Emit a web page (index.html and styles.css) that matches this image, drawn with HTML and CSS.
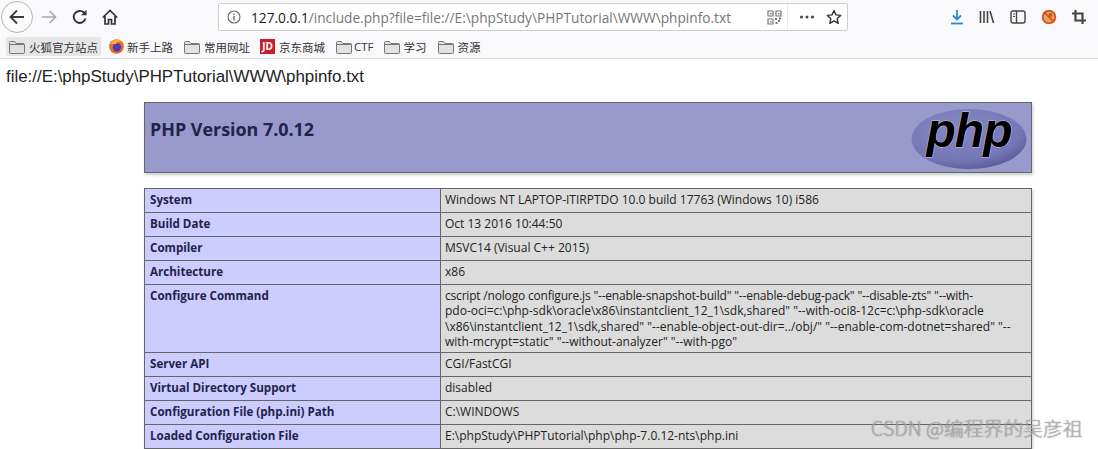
FILE: index.html
```html
<!DOCTYPE html>
<html lang="zh">
<head>
<meta charset="utf-8">
<title>phpinfo</title>
<link rel="stylesheet" href="styles.css">
</head>
<body>
<header class="chrome">
  <div class="navbar">
    <div class="nav-left">
      <span class="back"><svg width="20" height="20" viewBox="0 0 20 20"><path d="M17 10H4M10 3.500L3.500 10l6.500 6.500" fill="none" stroke="#3a3a3c" stroke-width="1.800"/></svg></span>
      <svg class="fwd" width="18" height="18" viewBox="0 0 18 18"><path d="M2 9h13M9.500 3l6 6-6 6" fill="none" stroke="#a9a9ab" stroke-width="1.600"/></svg>
      <svg class="reload" width="18" height="18" viewBox="0 0 18 18"><path d="M14.500 10.500A6 6 0 1 1 12.800 4.500L15 6.500" fill="none" stroke="#333" stroke-width="1.900"/><path d="M15.500 1.800v5.500H10z" fill="#333"/></svg>
      <svg class="home" width="18" height="18" viewBox="0 0 18 18"><path d="M1.800 9.500L9 2.500l7.200 7M4 8v8h3.500v-4.500h3V16H14V8" fill="none" stroke="#333" stroke-width="1.700"/></svg>
    </div>
    <div class="urlbar">
      <svg class="info" width="14" height="14" viewBox="0 0 14 14"><circle cx="7" cy="7" r="6" fill="none" stroke="#666" stroke-width="1.100"/><path d="M7 6v4.500M7 3.500v1.400" stroke="#666" stroke-width="1.300"/></svg>
      <div class="url"><span class="host">127.0.0.1</span>/include.php?file=file://E:\phpStudy\PHPTutorial\WWW\phpinfo.txt</div>
      <svg class="qr" width="15" height="15" viewBox="0 0 15 15"><path d="M1 1h5v5H1zM9 1h5v5H9zM1 9h5v5H1z" fill="none" stroke="#777" stroke-width="1.200"/><path d="M3 3h1.500v1.500H3zM11 3h1.500v1.500H11zM3 11h1.500v1.500H3zM8 8h2v2H8zM11 10h2v2h-2zM8.500 12h2v2h-2zM12 7.500h2v2h-2z" fill="#777"/></svg>
      <span class="url-sep"></span>
      <svg class="dots" width="16" height="4" viewBox="0 0 16 4"><circle cx="2.500" cy="2" r="1.500" fill="#444"/><circle cx="8" cy="2" r="1.500" fill="#444"/><circle cx="13.500" cy="2" r="1.500" fill="#444"/></svg>
      <svg class="star" width="16" height="16" viewBox="0 0 16 16"><path d="M8 1.500l2 4.400 4.700.5-3.500 3.200 1 4.700L8 11.900l-4.200 2.400 1-4.700L1.300 6.400 6 5.900z" fill="none" stroke="#333" stroke-width="1.400" stroke-linejoin="round"/></svg>
    </div>
    <div class="tools">
      <svg width="14" height="16" viewBox="0 0 14 16"><path d="M7 1v9M3 6.500l4 4 4-4" fill="none" stroke="#2a8ad8" stroke-width="1.800"/><path d="M1 14.500h12" stroke="#2a8ad8" stroke-width="1.800"/></svg>
      <svg width="16" height="14" viewBox="0 0 16 14"><path d="M1.500 1v12M5 1v12M8.500 1v12M11 1l3.500 12" fill="none" stroke="#444" stroke-width="1.600"/></svg>
      <svg width="16" height="14" viewBox="0 0 16 14"><rect x="1" y="1" width="14" height="12" rx="2" fill="none" stroke="#444" stroke-width="1.400"/><path d="M6.500 1v12" stroke="#444" stroke-width="1.400"/><path d="M3 4h2M3 6.500h2" stroke="#444"/></svg>
      <svg width="16" height="16" viewBox="0 0 16 16"><circle cx="8" cy="8" r="7.300" fill="#f0a050"/><circle cx="8" cy="8" r="6.300" fill="none" stroke="#d2452d" stroke-width="1.500"/><path d="M3.500 3.500l9 9" stroke="#d2452d" stroke-width="1.500"/><circle cx="9.500" cy="6" r="2" fill="#9a6a3a"/></svg>
      <svg width="14" height="14" viewBox="0 0 14 14"><path d="M3.500 0v10.500H14M0 3.500h10.500V14" fill="none" stroke="#444" stroke-width="2.200"/></svg>
    </div>
  </div>
  <nav class="bookmarks">
    <span class="bm bm-active"><svg class="folder" viewBox="0 0 16 14"><path d="M.5 2.500a1 1 0 0 1 1-1h4l1.500 2h7.500a1 1 0 0 1 1 1v8a1 1 0 0 1-1 1h-13a1 1 0 0 1-1-1z" fill="#e1e1e1" stroke="#777"/><path d="M1 4.500h14" stroke="#777"/></svg>火狐官方站点</span>
    <span class="bm bm-fox"><svg class="fox" viewBox="0 0 16 16"><circle cx="8" cy="8" r="7.800" fill="#e8672b"/><circle cx="8.500" cy="8.800" r="4.400" fill="#4a3bb5"/><path d="M1.500 5.500c2-5 9-6 12-2.500-3-1-5 0-6 2.500-2.500-.5-4 0-6 0z" fill="#f9b233"/></svg>新手上路</span>
    <span class="bm"><svg class="folder" viewBox="0 0 16 14"><path d="M.5 2.500a1 1 0 0 1 1-1h4l1.500 2h7.500a1 1 0 0 1 1 1v8a1 1 0 0 1-1 1h-13a1 1 0 0 1-1-1z" fill="#e1e1e1" stroke="#777"/><path d="M1 4.500h14" stroke="#777"/></svg>常用网址</span>
    <span class="bm bm-jd"><span class="jd">JD</span>京东商城</span>
    <span class="bm bm-ctf"><svg class="folder" viewBox="0 0 16 14"><path d="M.5 2.500a1 1 0 0 1 1-1h4l1.500 2h7.500a1 1 0 0 1 1 1v8a1 1 0 0 1-1 1h-13a1 1 0 0 1-1-1z" fill="#e1e1e1" stroke="#777"/><path d="M1 4.500h14" stroke="#777"/></svg>CTF</span>
    <span class="bm"><svg class="folder" viewBox="0 0 16 14"><path d="M.5 2.500a1 1 0 0 1 1-1h4l1.500 2h7.500a1 1 0 0 1 1 1v8a1 1 0 0 1-1 1h-13a1 1 0 0 1-1-1z" fill="#e1e1e1" stroke="#777"/><path d="M1 4.500h14" stroke="#777"/></svg>学习</span>
    <span class="bm"><svg class="folder" viewBox="0 0 16 14"><path d="M.5 2.500a1 1 0 0 1 1-1h4l1.500 2h7.500a1 1 0 0 1 1 1v8a1 1 0 0 1-1 1h-13a1 1 0 0 1-1-1z" fill="#e1e1e1" stroke="#777"/><path d="M1 4.500h14" stroke="#777"/></svg>资源</span>
  </nav>
</header>
<main class="page">
  <p class="echo">file://E:\phpStudy\PHPTutorial\WWW\phpinfo.txt</p>
  <section class="phpinfo">
    <div class="banner">
      <h1>PHP Version 7.0.12</h1>
      <svg class="logo" width="116" height="62" viewBox="0 0 116 62"><defs><radialGradient id="g" cx="0.4" cy="0.3" r="0.8"><stop offset="0" stop-color="#8588c4"/><stop offset="0.7" stop-color="#7477b5"/><stop offset="1" stop-color="#50528e"/></radialGradient></defs><ellipse cx="58" cy="31" rx="57.500" ry="30" fill="url(#g)"/><text x="58" y="39" class="logo-text">php</text></svg>
    </div>
    <table class="info-table">
      <tr><th>System</th><td>Windows NT LAPTOP-ITIRPTDO 10.0 build 17763 (Windows 10) i586</td></tr>
      <tr><th>Build Date</th><td>Oct 13 2016 10:44:50</td></tr>
      <tr><th>Compiler</th><td>MSVC14 (Visual C++ 2015)</td></tr>
      <tr><th>Architecture</th><td>x86</td></tr>
      <tr><th>Configure Command</th><td><span class="tight">cscript /nologo configure.js "--enable-snapshot-build" "--enable-debug-pack" "--disable-zts" "--with-</span><br>pdo-oci=c:\php-sdk\oracle\x86\instantclient_12_1\sdk,shared" "--with-oci8-12c=c:\php-sdk\oracle<br>\x86\instantclient_12_1\sdk,shared" "--enable-object-out-dir=../obj/" "--enable-com-dotnet=shared" "--<br>with-mcrypt=static" "--without-analyzer" "--with-pgo"</td></tr>
      <tr><th>Server API</th><td>CGI/FastCGI</td></tr>
      <tr><th>Virtual Directory Support</th><td>disabled</td></tr>
      <tr><th>Configuration File (php.ini) Path</th><td>C:\WINDOWS</td></tr>
      <tr><th>Loaded Configuration File</th><td>E:\phpStudy\PHPTutorial\php\php-7.0.12-nts\php.ini</td></tr>
    </table>
  </section>
</main>
<div class="watermark">CSDN @编程界的吴彦祖</div>
</body>
</html>
```
FILE: styles.css
```css
html, body { margin: 0; padding: 0; }
body {
  width: 1098px;
  height: 449px;
  overflow: hidden;
  position: relative;
  background: #fff;
  font-family: "Open Sans", "Noto Sans CJK SC", sans-serif;
  color: #222;
}
.chrome {
  background: #f9f9fb;
  border-bottom: 1px solid #dcdcdc;
  height: 58px;
}
.navbar {
  height: 34px;
  display: flex;
  align-items: center;
}
.nav-left {
  width: 218px;
  flex: none;
  display: flex;
  align-items: center;
  padding-left: 1px;
  box-sizing: border-box;
}
.back {
  width: 30px;
  height: 30px;
  border: 1px solid #b4b4b6;
  border-radius: 50%;
  display: flex;
  align-items: center;
  justify-content: center;
  flex: none;
  background: #fbfbfc;
}
.fwd { margin-left: 7px; }
.reload { margin-left: 13px; }
.home { margin-left: 12px; }
.urlbar {
  width: 630px;
  height: 28px;
  flex: none;
  box-sizing: border-box;
  background: #fff;
  border: 1px solid #cfcfd1;
  border-radius: 2px;
  display: flex;
  align-items: center;
  padding-left: 8px;
}
.info { flex: none; }
.url {
  margin-left: 10px;
  font-size: 13.700px;
  color: #777;
  white-space: nowrap;
  width: 482px;
  flex: none;
  overflow: hidden;
}
.host { color: #222; }
.qr { margin-left: 34px; flex: none; }
.url-sep { width: 1px; height: 26px; background: #ececec; margin-left: 5px; flex: none; }
.dots { margin-left: 11px; flex: none; }
.star { margin-left: 11px; flex: none; }
.tools {
  flex: 1;
  display: flex;
  align-items: center;
  padding-left: 102px;
  gap: 15px;
}
.bookmarks {
  height: 24px;
  padding: 1px 0 0 6px;
  box-sizing: border-box;
  display: flex;
  align-items: center;
  font-size: 11.500px;
  color: #333;
}
.bm {
  display: flex;
  align-items: center;
  gap: 4px;
  height: 19px;
  padding: 0 3px;
  margin-right: 5px;
  border-radius: 2px;
  white-space: nowrap;
}
.bm-active { background: #e6e6e8; }
.bm-fox { gap: 3px; }
.bm-jd { margin-left: -1px; }
.bm-ctf { gap: 2px; margin-right: 4px; }
.folder { width: 16px; height: 14px; flex: none; }
.fox { width: 15px; height: 15px; flex: none; }
.jd {
  width: 15px;
  height: 15px;
  background: #c5202d;
  color: #fff;
  font-size: 10px;
  font-weight: 700;
  line-height: 15px;
  text-align: center;
  flex: none;
}
.page { display: block; }
.echo {
  margin: 0;
  padding: 8px 0 0 6px;
  height: 33px;
  box-sizing: border-box;
  font-family: "Liberation Sans", sans-serif;
  font-size: 16.900px;
  line-height: 20px;
  color: #222;
}
.phpinfo {
  width: 888px;
  margin: 10px 0 0 144px;
  font-family: "Open Sans", sans-serif;
}
.banner {
  height: 71px;
  box-sizing: border-box;
  background: #9999cc;
  border: 1px solid #666;
  box-shadow: 1px 2px 3px #ccc;
  padding: 5px 4px 0 5px;
  display: flex;
  justify-content: space-between;
  align-items: flex-start;
}
.banner h1 {
  margin: 9px 0 0;
  font-size: 17.900px;
  line-height: 24px;
  font-weight: 700;
  color: #22224a;
}
.logo { margin-top: 0; overflow: visible; }
.logo-text {
  font-family: "Liberation Sans", sans-serif;
  font-size: 48px;
  font-style: italic;
  font-weight: 700;
  text-anchor: middle;
  fill: #000;
  stroke: #c9cae6;
  stroke-width: 1px;
  paint-order: stroke;
  letter-spacing: -1px;
}
.info-table {
  width: 888px;
  margin-top: 15px;
  border-collapse: collapse;
  table-layout: fixed;
  font-size: 11.600px;
  box-shadow: 1px 2px 3px #ccc;
}
.info-table th, .info-table td {
  border: 1px solid #666;
  padding: 3px 4px;
  line-height: 15.300px;
  vertical-align: top;
  text-align: left;
  height: 17px;
}
.info-table th {
  width: 286px;
  padding-left: 5px;
  background: #ccccff;
  font-weight: 700;
  color: #22224a;
}
.info-table td {
  background: #dcdcdc;
  color: #222;
  font-size: 12px;
  white-space: nowrap;
}
.tight { letter-spacing: -0.190px; }
.watermark {
  position: absolute;
  left: 871px;
  top: 415px;
  font-family: "Noto Sans CJK SC", sans-serif;
  font-weight: 300;
  font-size: 19.800px;
  line-height: 26px;
  color: rgba(235, 235, 235, 0.6);
  text-shadow: 0 0 1px #444;
  white-space: nowrap;
}
```
